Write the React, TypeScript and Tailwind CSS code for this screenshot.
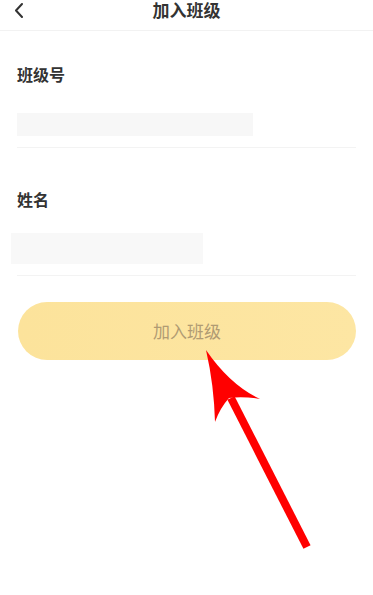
import React from "react";

export default function App() {
  return (
    <div
      className="relative w-[373px] h-[595px] bg-white overflow-hidden"
      style={{ fontFamily: '"Noto Sans CJK SC", "Noto Sans", sans-serif' }}
    >
      {/* Header */}
      <div className="relative h-[31px] border-b border-[#f2f2f2] flex items-start justify-center">
        <svg
          className="absolute left-[13px] top-[2px]"
          width="12"
          height="16"
          viewBox="0 0 12 16"
          fill="none"
        >
          <path d="M9 2 L3 8.5 L9 15" stroke="#333" strokeWidth="2" strokeLinecap="round" strokeLinejoin="round" />
        </svg>
        <div className="text-[17px] leading-[20px] font-bold text-[#333] mt-0">加入班级</div>
      </div>

      {/* Class number */}
      <div className="px-[17px]">
        <div className="mt-[32px] text-[16px] leading-[22px] font-bold text-[#333]">班级号</div>
        <div className="mt-[28px] w-[236px] h-[23px] bg-[#f7f7f7]" />
        <div className="mt-[11px] h-px bg-[#f3f3f3]" />
      </div>

      {/* Name */}
      <div className="px-[17px]">
        <div className="mt-[40px] text-[16px] leading-[22px] font-bold text-[#333]">姓名</div>
        <div className="mt-[23px] ml-[-6px] w-[192px] h-[31px] bg-[#f8f8f8]" />
        <div className="mt-[11px] h-px bg-[#f3f3f3]" />
      </div>

      {/* Button */}
      <div className="pl-[18px] pr-[17px] mt-[26px]">
        <div className="h-[58px] rounded-full bg-gradient-to-r from-[#fce39b] to-[#fde6a3] flex items-center justify-center">
          <span className="text-[17px] text-[#b09b73]">加入班级</span>
        </div>
      </div>

      {/* Red arrow overlay */}
      <svg
        className="absolute left-0 top-0 pointer-events-none"
        width="373"
        height="595"
        viewBox="0 0 373 595"
      >
        <line x1="231" y1="398" x2="307" y2="547" stroke="#ff0000" strokeWidth="8" />
        <path
          d="M206 350 Q230 385 260 399 Q243 396 229 398 Q220 408 215 422 Q214 385 206 350 Z"
          fill="#ff0000"
        />
      </svg>
    </div>
  );
}
